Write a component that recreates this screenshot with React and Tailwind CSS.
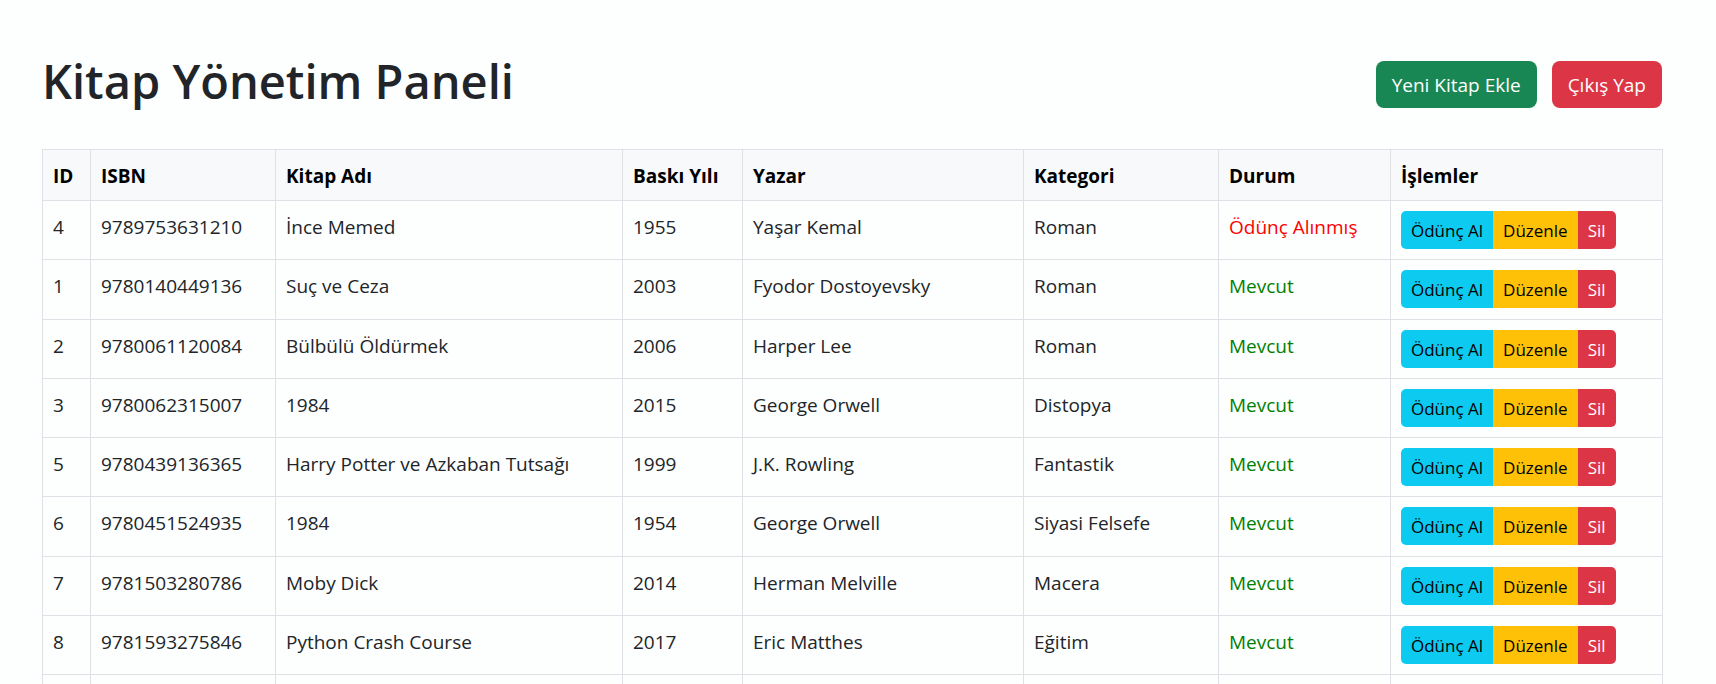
const columns = [
  ["ID", "w-[48px]"],
  ["ISBN", "w-[185px]"],
  ["Kitap Adı", "w-[347px]"],
  ["Baskı Yılı", "w-[120px]"],
  ["Yazar", "w-[281px]"],
  ["Kategori", "w-[195px]"],
  ["Durum", "w-[172px]"],
  ["İşlemler", "w-[272px]"],
];

const books = [
  { id: 4, isbn: "9789753631210", title: "İnce Memed", year: 1955, author: "Yaşar Kemal", category: "Roman", borrowed: true },
  { id: 1, isbn: "9780140449136", title: "Suç ve Ceza", year: 2003, author: "Fyodor Dostoyevsky", category: "Roman" },
  { id: 2, isbn: "9780061120084", title: "Bülbülü Öldürmek", year: 2006, author: "Harper Lee", category: "Roman" },
  { id: 3, isbn: "9780062315007", title: "1984", year: 2015, author: "George Orwell", category: "Distopya" },
  { id: 5, isbn: "9780439136365", title: "Harry Potter ve Azkaban Tutsağı", year: 1999, author: "J.K. Rowling", category: "Fantastik" },
  { id: 6, isbn: "9780451524935", title: "1984", year: 1954, author: "George Orwell", category: "Siyasi Felsefe" },
  { id: 7, isbn: "9781503280786", title: "Moby Dick", year: 2014, author: "Herman Melville", category: "Macera" },
  { id: 8, isbn: "9781593275846", title: "Python Crash Course", year: 2017, author: "Eric Matthes", category: "Eğitim" },
];

const frame = "border border-[#dee2e6] px-[10px] align-top whitespace-nowrap";
const cell = `${frame} pt-[11px] pb-[9px]`;
const action = "px-[10px] pt-[7px] pb-[5px]";
const headerButton = "rounded-[8px] px-[16px] pt-[9px] pb-[7px] leading-[31px]";

function BookRow({ book }) {
  return (
    <tr>
      <td className={cell}>{book.id}</td>
      <td className={cell}>{book.isbn}</td>
      <td className={cell}>{book.title}</td>
      <td className={cell}>{book.year}</td>
      <td className={cell}>{book.author}</td>
      <td className={cell}>{book.category}</td>
      <td className={cell}>
        <span className={book.borrowed ? "text-[#ff0000]" : "text-[#008000]"}>
          {book.borrowed ? "Ödünç Alınmış" : "Mevcut"}
        </span>
      </td>
      <td className={`${frame} py-[10px]`}>
        <div className="flex text-[17px] leading-[26px]">
          <button type="button" className={`${action} rounded-l-[5px] bg-[#0dcaf0] text-black`}>Ödünç Al</button>
          <button type="button" className={`${action} bg-[#ffc107] text-black`}>Düzenle</button>
          <button type="button" className={`${action} rounded-r-[5px] bg-[#dc3545] text-white`}>Sil</button>
        </div>
      </td>
    </tr>
  );
}

export default function App() {
  return (
    <main className="h-screen overflow-hidden bg-[#fdfefe] pl-[42px] pr-[54px] pt-[51px] font-['Open_Sans','Noto_Sans',sans-serif] text-[19px] leading-[30px] text-[#212529]">
      <header className="mb-[38px] flex items-center justify-between">
        <h1 className="text-[47px] font-semibold leading-[60px]">Kitap Yönetim Paneli</h1>
        <div className="flex gap-[15px] pt-[7px] text-white">
          <button type="button" className={`${headerButton} bg-[#198754]`}>Yeni Kitap Ekle</button>
          <button type="button" className={`${headerButton} bg-[#dc3545]`}>Çıkış Yap</button>
        </div>
      </header>
      <table className="h-[585px] w-full table-fixed border-collapse">
        <thead>
          <tr className="bg-[#f8f9fa] text-left text-black">
            {columns.map(([label, width]) => (
              <th key={label} scope="col" className={`${cell} ${width} font-bold`}>{label}</th>
            ))}
          </tr>
        </thead>
        <tbody>
          {books.map((book) => (
            <BookRow key={book.id} book={book} />
          ))}
          <tr className="h-[59px]">
            {columns.map(([label]) => (
              <td key={label} className={cell} />
            ))}
          </tr>
        </tbody>
      </table>
    </main>
  );
}
